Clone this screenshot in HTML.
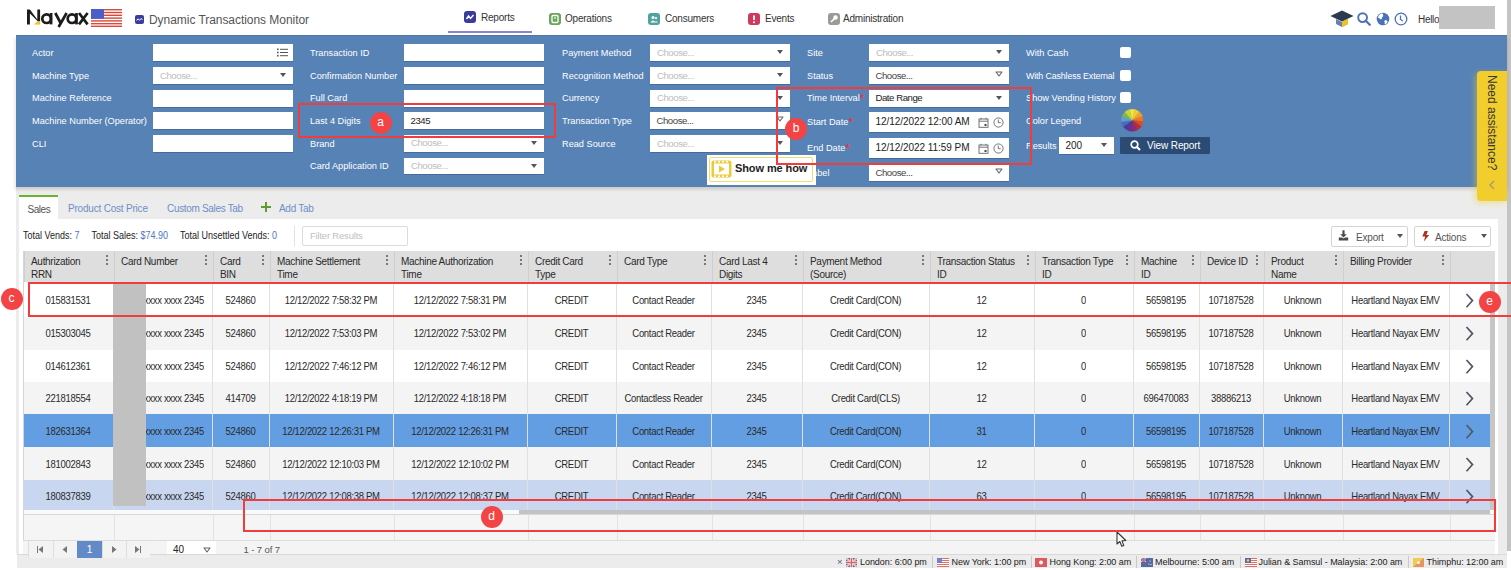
<!DOCTYPE html><html><head><meta charset="utf-8"><style>
*{box-sizing:border-box;margin:0;padding:0}
html,body{width:1511px;height:570px;overflow:hidden;background:#fff;font-family:"Liberation Sans", sans-serif;}
.a{position:absolute;white-space:nowrap}
.lbl{position:absolute;color:#fff;font-size:9.2px;white-space:nowrap;line-height:12px}
.inp{position:absolute;background:#fff;box-shadow:0 1px 0 rgba(40,70,110,.35)}
.ph{position:absolute;left:7px;top:3px;font-size:9.6px;letter-spacing:-0.45px;color:#bdbdbd;line-height:12px;white-space:nowrap}
.val{position:absolute;left:6.5px;top:3px;font-size:9.6px;letter-spacing:-0.45px;color:#444;line-height:12px;white-space:nowrap}
.tri{position:absolute;width:0;height:0;border-left:3px solid transparent;border-right:3px solid transparent;border-top:4px solid #555}
.trio{position:absolute;width:8px;height:6px}
.cb{position:absolute;width:11px;height:11px;background:#fff;border-radius:2px}
.red{position:absolute;border:2px solid #f03c3c}
.dot{position:absolute;width:22px;height:22px;border-radius:50%;background:#f24444;color:#fff;font-size:12px;line-height:21px;text-align:center}
.th{position:absolute;top:251px;height:31px;background:#dedede;border-left:1px solid #cfcfcf;font-size:10px;letter-spacing:-0.3px;color:#2a2a2a;line-height:13.5px;padding:3.5px 0 0 6px;white-space:nowrap}
.kd{position:absolute;right:6.5px;top:4px;width:2px}
.kd i{display:block;width:2px;height:2px;background:#555;margin-bottom:2px;border-radius:1px}
.td{position:absolute;font-size:9.5px;letter-spacing:-0.3px;color:#2a2a2a;transform:scaleY(1.06);text-align:center;line-height:12px;white-space:nowrap;overflow:hidden}
</style></head><body>

<svg class="a" style="left:24px;top:4px" width="68" height="26" viewBox="24 4 68 26">
 <g stroke="#1c1c1c" stroke-width="2.7" fill="none">
  
  <circle cx="46.6" cy="18.7" r="4.3"/>
  <path d="M51.1 13 V24.4"/>
  <path d="M55.3 13 L61.2 24.2 M66.6 13 L58.6 27"/>
  <circle cx="72" cy="18.7" r="4.3"/>
  <path d="M76.5 13 V24.4"/>
  <path d="M79 13 L87.6 24.4 M87.6 13 L79 24.4"/>
 </g>
 <path d="M27 9.4 H29.9 L37.3 19.6 V9.4 H40.1 V21.6 L38 21.6 L29.9 13.6 V24.4 H27 Z" fill="#1c1c1c"/>
 <path d="M33.8 24.4 L40.1 24.4 L40.1 21.2 L37.6 21.2 Z" fill="#f0c21c"/>
</svg>
<svg class="a" style="left:91px;top:9px" width="31" height="18" viewBox="0 0 31 18">
 <rect width="31" height="18" fill="#fff"/>
 <g fill="#d9483b"><rect y="0" width="31" height="1.4"/><rect y="2.8" width="31" height="1.4"/><rect y="5.6" width="31" height="1.4"/><rect y="8.4" width="31" height="1.4"/><rect y="11.2" width="31" height="1.4"/><rect y="14" width="31" height="1.4"/><rect y="16.6" width="31" height="1.4"/></g>
 <rect width="13" height="9.8" fill="#4b5fc9"/>
</svg>
<svg class="a" style="left:135px;top:15px" width="9" height="9" viewBox="0 0 9 9"><rect width="9" height="9" rx="2" fill="#3a3d9a"/><path d="M1.5 5.5 L3 3.8 L4.5 5.3 L6 3.5 L7.5 4.6" stroke="#fff" stroke-width="1" fill="none"/></svg>
<div class="a" style="left:149px;top:12.5px;font-size:12px;color:#555;line-height:15px;letter-spacing:-0.05px">Dynamic Transactions Monitor</div>

<svg class="a" style="left:464px;top:11.0px" width="12" height="12" viewBox="0 0 12 12"><rect width="12" height="12" rx="3" fill="#3b3b9c"/><path d="M2.5 8 L4.5 5 L6.5 7.5 L9.5 4" stroke="#fff" stroke-width="1.4" fill="none"/></svg>
<div class="a" style="left:481px;top:10.5px;font-size:10px;color:#333;line-height:14px;letter-spacing:-0.22px">Reports</div>
<svg class="a" style="left:549px;top:12.5px" width="12" height="12" viewBox="0 0 12 12"><rect width="12" height="12" rx="3" fill="#6aa55a"/><rect x="3" y="2.5" width="6" height="7" rx="1" fill="none" stroke="#fff" stroke-width="1.3"/><path d="M6 4 V6" stroke="#fff" stroke-width="1.2"/></svg>
<div class="a" style="left:565px;top:12px;font-size:10px;color:#333;line-height:14px;letter-spacing:-0.22px">Operations</div>
<svg class="a" style="left:648px;top:12.5px" width="12" height="12" viewBox="0 0 12 12"><rect width="12" height="12" rx="3" fill="#4fa3a0"/><circle cx="5" cy="4.5" r="1.5" fill="#fff"/><path d="M2.5 9.5 Q5 5.5 7.5 9.5 Z" fill="#fff"/><circle cx="8" cy="5" r="1.2" fill="#fff" opacity=".8"/><path d="M6.5 9.5 Q8 6.5 10 9.5 Z" fill="#fff" opacity=".8"/></svg>
<div class="a" style="left:665px;top:12px;font-size:10px;color:#333;line-height:14px;letter-spacing:-0.22px">Consumers</div>
<svg class="a" style="left:748px;top:12.5px" width="12" height="12" viewBox="0 0 12 12"><rect width="12" height="12" rx="3" fill="#cc3a5f"/><path d="M6 2.5 V7" stroke="#fff" stroke-width="1.8"/><circle cx="6" cy="9.2" r="1" fill="#fff"/></svg>
<div class="a" style="left:765px;top:12px;font-size:10px;color:#333;line-height:14px;letter-spacing:-0.22px">Events</div>
<svg class="a" style="left:828px;top:12.5px" width="12" height="12" viewBox="0 0 12 12"><rect width="12" height="12" rx="3" fill="#9a9a9a"/><circle cx="7.5" cy="4.5" r="2.2" fill="#fff"/><path d="M6.5 5.5 L3 9" stroke="#fff" stroke-width="1.6"/></svg>
<div class="a" style="left:843px;top:12px;font-size:10px;color:#333;line-height:14px;letter-spacing:-0.22px">Administration</div>
<div class="a" style="left:448px;top:31px;width:84px;height:2px;background:#8c84c4"></div>

<svg class="a" style="left:1330px;top:10px" width="24" height="18" viewBox="0 0 24 18">
 <path d="M12 0.5 L23.5 6 L12 11.5 L0.5 6 Z" fill="#2b3a4e"/>
 <path d="M6 9 L6 14 L12 17 L18 14 L18 9 L12 12 Z" fill="#6b7fb0"/>
 <path d="M12 12 L18 9 L18 14 L12 17 Z" fill="#f2c21a"/>
</svg>
<svg class="a" style="left:1357px;top:12px" width="14" height="14" viewBox="0 0 14 14"><circle cx="5.6" cy="5.6" r="4.4" stroke="#4a72b8" stroke-width="1.9" fill="none"/><path d="M8.7 8.7 L12.8 12.8" stroke="#4a72b8" stroke-width="2.2" stroke-linecap="round"/></svg>
<svg class="a" style="left:1376px;top:12px" width="14" height="14" viewBox="0 0 14 14"><circle cx="7" cy="7" r="6.3" fill="#4a72b8"/><path d="M4.5 2 Q6.5 3.5 5.8 5.5 Q4.2 6.2 4.8 8 Q6.2 9 5.5 12 Q4.5 11 4 9.5 Q2.5 8.5 2.5 6.5 Q3 4 4.5 2 Z" fill="#fff" opacity=".0"/><path d="M6 1.2 Q8 2.5 7 4.5 Q5.5 5 6 6.5 L4.8 7.5 Q4 6 2.2 6 Q1.5 3 6 1.2 Z M9.2 8 Q11.8 8.2 11.5 10 Q10.5 12.2 8.6 12.6 Q9.2 10.5 8.2 9.5 Z" fill="#fff"/></svg>
<svg class="a" style="left:1394px;top:12px" width="14" height="14" viewBox="0 0 14 14"><circle cx="7" cy="7" r="5.8" stroke="#4a72b8" stroke-width="1.3" fill="none"/><path d="M6.5 3.5 L6.5 7.5 L9 9" stroke="#4a72b8" stroke-width="1.3" fill="none"/></svg>
<div class="a" style="left:1418px;top:14px;font-size:10px;color:#333;line-height:12px;letter-spacing:-0.3px">Hello</div>
<div class="a" style="left:1439px;top:6px;width:56px;height:23px;background:#c3c3c3"></div>
<div class="a" style="left:1507px;top:0;width:4px;height:551px;background:#c4c4c4"></div>

<div class="a" style="left:16px;top:35px;width:1491px;height:152px;background:#5782b5;border-top:1px solid #4d77ab;box-shadow:0 1px 0 #4a74a6, 0 3px 4px rgba(60,50,40,.22)"></div>
<div class="lbl" style="left:32px;top:46.5px">Actor</div>
<div class="lbl" style="left:32px;top:69.5px">Machine Type</div>
<div class="lbl" style="left:32px;top:92.0px">Machine Reference</div>
<div class="lbl" style="left:32px;top:114.5px">Machine Number (Operator)</div>
<div class="lbl" style="left:32px;top:137.5px">CLI</div>
<div class="inp" style="left:153px;top:44px;width:140px;height:17px"><svg style="position:absolute;right:5px;top:4px" width="11" height="9" viewBox="0 0 11 9"><g fill="#555"><rect x="0" y="0.5" width="1.6" height="1.6"/><rect x="0" y="3.7" width="1.6" height="1.6"/><rect x="0" y="6.9" width="1.6" height="1.6"/><rect x="3" y="0.8" width="8" height="1"/><rect x="3" y="4" width="8" height="1"/><rect x="3" y="7.2" width="8" height="1"/></g></svg></div>
<div class="inp" style="left:153px;top:67px;width:140px;height:17px"><div class="ph" style="top:2.5px">Choose...</div></div><div class="tri" style="left:279.8px;top:73.3px"></div>
<div class="inp" style="left:153px;top:89.5px;width:140px;height:17px"></div>
<div class="inp" style="left:153px;top:112px;width:140px;height:17px"></div>
<div class="inp" style="left:153px;top:135px;width:140px;height:17px"></div>
<div class="lbl" style="left:310px;top:46.5px">Transaction ID</div>
<div class="lbl" style="left:310px;top:69.5px">Confirmation Number</div>
<div class="lbl" style="left:310px;top:92.0px">Full Card</div>
<div class="lbl" style="left:310px;top:114.5px">Last 4 Digits</div>
<div class="lbl" style="left:310px;top:137.5px">Brand</div>
<div class="lbl" style="left:310px;top:160.0px">Card Application ID</div>
<div class="inp" style="left:404px;top:44px;width:140px;height:17px"></div>
<div class="inp" style="left:404px;top:67px;width:140px;height:17px"></div>
<div class="inp" style="left:404px;top:89.5px;width:140px;height:17px"></div>
<div class="inp" style="left:404px;top:112px;width:140px;height:17px"><div class="val" style="top:2.5px"><span style="color:#222">2345</span></div></div>
<div class="inp" style="left:404px;top:135px;width:140px;height:16.5px"><div class="ph" style="top:2.25px">Choose...</div></div><div class="tri" style="left:530.8px;top:141.05px"></div>
<div class="inp" style="left:404px;top:157.5px;width:140px;height:16.5px"><div class="ph" style="top:2.25px">Choose...</div></div><div class="tri" style="left:530.8px;top:163.55px"></div>
<div class="lbl" style="left:562px;top:46.5px">Payment Method</div>
<div class="lbl" style="left:562px;top:69.5px">Recognition Method</div>
<div class="lbl" style="left:562px;top:92.0px">Currency</div>
<div class="lbl" style="left:562px;top:114.5px">Transaction Type</div>
<div class="lbl" style="left:562px;top:137.5px">Read Source</div>
<div class="inp" style="left:650px;top:44px;width:140px;height:17px"><div class="ph" style="top:2.5px">Choose...</div></div><div class="tri" style="left:776.8px;top:50.3px"></div>
<div class="inp" style="left:650px;top:67px;width:140px;height:17px"><div class="ph" style="top:2.5px">Choose...</div></div><div class="tri" style="left:776.8px;top:73.3px"></div>
<div class="inp" style="left:650px;top:89.5px;width:140px;height:17px"><div class="ph" style="top:2.5px">Choose...</div></div><div class="tri" style="left:776.8px;top:95.8px"></div>
<div class="inp" style="left:650px;top:112px;width:140px;height:17px"><div class="val" style="top:2.5px">Choose...</div></div><svg class="a" style="left:776.3px;top:115.8px" width="8" height="6" viewBox="0 0 8 6"><path d="M1 1 L7 1 L4 5 Z" fill="#fff" stroke="#666" stroke-width="1.1" stroke-linejoin="round"/></svg>
<div class="inp" style="left:650px;top:135px;width:140px;height:17px"><div class="ph" style="top:2.5px">Choose...</div></div><div class="tri" style="left:776.8px;top:141.3px"></div>
<div class="lbl" style="left:807px;top:46.5px">Site</div>
<div class="inp" style="left:869px;top:44px;width:140px;height:17px"><div class="ph" style="top:2.5px">Choose...</div></div><div class="tri" style="left:995.8px;top:50.3px"></div>
<div class="lbl" style="left:807px;top:69.5px">Status</div>
<div class="inp" style="left:869px;top:67px;width:140px;height:17px"><div class="val" style="top:2.5px">Choose...</div></div><svg class="a" style="left:995.3px;top:70.8px" width="8" height="6" viewBox="0 0 8 6"><path d="M1 1 L7 1 L4 5 Z" fill="#fff" stroke="#666" stroke-width="1.1" stroke-linejoin="round"/></svg>
<div class="lbl" style="left:807px;top:92.0px">Time Interval<span style="color:#ec3540;font-size:10px;font-weight:bold;position:relative;top:1px;margin-left:0.5px">*</span></div>
<div class="inp" style="left:869px;top:89.5px;width:140px;height:17px"><div class="val" style="top:2.5px"><span style="color:#222">Date Range</span></div></div><div class="tri" style="left:995.8px;top:95.8px"></div>
<div class="lbl" style="left:807px;top:116.0px">Start Date<span style="color:#ec3540;font-size:10px;font-weight:bold;position:relative;top:1px;margin-left:0.5px">*</span></div>
<div class="inp" style="left:869px;top:112px;width:140px;height:19.5px"><div class="val" style="top:3.75px"><span style="font-size:10px;letter-spacing:-0.05px;color:#222">12/12/2022 12:00 AM</span></div><svg style="position:absolute;left:109px;top:4.5px" width="11" height="11" viewBox="0 0 11 11"><rect x="1" y="2" width="9" height="8.3" fill="none" stroke="#666" stroke-width="0.9"/><path d="M1 4.2 L10 4.2" stroke="#666" stroke-width="0.9"/><path d="M3 0.8 L3 2.5 M8 0.8 L8 2.5" stroke="#666" stroke-width="0.9"/><rect x="6.5" y="7" width="2" height="2" fill="#444"/></svg><svg style="position:absolute;left:124px;top:5px" width="11" height="11" viewBox="0 0 11 11"><circle cx="5.5" cy="5.5" r="4.6" fill="none" stroke="#666" stroke-width="0.9"/><path d="M5.3 2.6 L5.3 5.7 L7.8 5.7" fill="none" stroke="#666" stroke-width="0.9"/></svg></div>
<div class="lbl" style="left:807px;top:142.0px">End Date<span style="color:#ec3540;font-size:10px;font-weight:bold;position:relative;top:1px;margin-left:0.5px">*</span></div>
<div class="inp" style="left:869px;top:138px;width:140px;height:19.5px"><div class="val" style="top:3.75px"><span style="font-size:10px;letter-spacing:-0.05px;color:#222">12/12/2022 11:59 PM</span></div><svg style="position:absolute;left:109px;top:4.5px" width="11" height="11" viewBox="0 0 11 11"><rect x="1" y="2" width="9" height="8.3" fill="none" stroke="#666" stroke-width="0.9"/><path d="M1 4.2 L10 4.2" stroke="#666" stroke-width="0.9"/><path d="M3 0.8 L3 2.5 M8 0.8 L8 2.5" stroke="#666" stroke-width="0.9"/><rect x="6.5" y="7" width="2" height="2" fill="#444"/></svg><svg style="position:absolute;left:124px;top:5px" width="11" height="11" viewBox="0 0 11 11"><circle cx="5.5" cy="5.5" r="4.6" fill="none" stroke="#666" stroke-width="0.9"/><path d="M5.3 2.6 L5.3 5.7 L7.8 5.7" fill="none" stroke="#666" stroke-width="0.9"/></svg></div>
<div class="lbl" style="left:807px;top:166.5px">Label</div>
<div class="inp" style="left:869px;top:164.5px;width:140px;height:16px"><div class="val" style="top:2.0px">Choose...</div></div><svg class="a" style="left:995.3px;top:167.8px" width="8" height="6" viewBox="0 0 8 6"><path d="M1 1 L7 1 L4 5 Z" fill="#fff" stroke="#666" stroke-width="1.1" stroke-linejoin="round"/></svg>
<div class="lbl" style="left:1026px;top:46.5px">With Cash</div>
<div class="cb" style="left:1120px;top:47px"></div>
<div class="lbl" style="left:1026px;top:69.5px"><span style="letter-spacing:-0.15px;font-size:8.9px">With Cashless External</span></div>
<div class="cb" style="left:1120px;top:70px"></div>
<div class="lbl" style="left:1026px;top:92.0px">Show Vending History</div>
<div class="cb" style="left:1120px;top:92px"></div>
<div class="lbl" style="left:1026px;top:114.5px">Color Legend</div>
<svg class="a" style="left:1120.5px;top:109px" width="22.5" height="22.5" viewBox="0 0 22.5 22.5"><path d="M11.25 11.25 L8.62 0.57 A11 11 0 0 1 13.88 0.57 Z" fill="#f4e43c" stroke="#f4e43c" stroke-width="0.4"/><path d="M11.25 11.25 L13.88 0.57 A11 11 0 0 1 18.54 3.02 Z" fill="#f2c935" stroke="#f2c935" stroke-width="0.4"/><path d="M11.25 11.25 L18.54 3.02 A11 11 0 0 1 21.54 7.35 Z" fill="#eea22e" stroke="#eea22e" stroke-width="0.4"/><path d="M11.25 11.25 L21.54 7.35 A11 11 0 0 1 22.17 12.58 Z" fill="#e8782b" stroke="#e8782b" stroke-width="0.4"/><path d="M11.25 11.25 L22.17 12.58 A11 11 0 0 1 20.30 17.50 Z" fill="#db4d2a" stroke="#db4d2a" stroke-width="0.4"/><path d="M11.25 11.25 L20.30 17.50 A11 11 0 0 1 16.36 20.99 Z" fill="#b92c3b" stroke="#b92c3b" stroke-width="0.4"/><path d="M11.25 11.25 L16.36 20.99 A11 11 0 0 1 11.25 22.25 Z" fill="#8f2a66" stroke="#8f2a66" stroke-width="0.4"/><path d="M11.25 11.25 L11.25 22.25 A11 11 0 0 1 6.14 20.99 Z" fill="#6a2e8c" stroke="#6a2e8c" stroke-width="0.4"/><path d="M11.25 11.25 L6.14 20.99 A11 11 0 0 1 2.20 17.50 Z" fill="#4f3a98" stroke="#4f3a98" stroke-width="0.4"/><path d="M11.25 11.25 L2.20 17.50 A11 11 0 0 1 0.33 12.58 Z" fill="#4a6cc0" stroke="#4a6cc0" stroke-width="0.4"/><path d="M11.25 11.25 L0.33 12.58 A11 11 0 0 1 0.96 7.35 Z" fill="#5f9ed6" stroke="#5f9ed6" stroke-width="0.4"/><path d="M11.25 11.25 L0.96 7.35 A11 11 0 0 1 3.96 3.02 Z" fill="#7cb84a" stroke="#7cb84a" stroke-width="0.4"/><path d="M11.25 11.25 L3.96 3.02 A11 11 0 0 1 8.62 0.57 Z" fill="#c8d63a" stroke="#c8d63a" stroke-width="0.4"/></svg>
<div class="lbl" style="left:1026px;top:139.5px">Results</div>
<div class="inp" style="left:1059px;top:137px;width:55px;height:17px"><div class="val" style="top:2.5px"><span style="font-size:10px;letter-spacing:-0.1px;color:#222">200</span></div></div><div class="tri" style="left:1100.8px;top:143.3px"></div>
<div class="a" style="left:1120px;top:137px;width:89.5px;height:17px;background:#2c4b74;border-radius:1px"></div>
<svg class="a" style="left:1130px;top:140px" width="11" height="11" viewBox="0 0 11 11"><circle cx="4.5" cy="4.5" r="3.3" stroke="#fff" stroke-width="1.7" fill="none"/><path d="M7 7 L10 10" stroke="#fff" stroke-width="2.2"/></svg>
<div class="a" style="left:1147px;top:139.5px;font-size:10px;color:#fff;line-height:12px;letter-spacing:-0.1px">View Report</div>

<div class="a" style="left:16px;top:187px;width:1491px;height:367px;background:#ececec"></div>
<div class="a" style="left:16px;top:187px;width:1491px;height:5px;background:linear-gradient(rgba(95,85,75,.22),rgba(95,85,75,0))"></div>
<div class="a" style="left:19px;top:219px;width:1479px;height:335px;background:#fff"></div>
<div class="a" style="left:19px;top:195px;width:39px;height:24px;background:#fff;border-top:2px solid #6ab42d"></div>
<div class="a" style="left:27.5px;top:203.5px;font-size:10px;color:#555;line-height:12px;letter-spacing:-0.45px">Sales</div>
<div class="a" style="left:68px;top:203px;font-size:10px;color:#6e8fc8;line-height:12px;letter-spacing:-0.2px">Product Cost Price</div>
<div class="a" style="left:167px;top:203px;font-size:10px;color:#6e8fc8;line-height:12px;letter-spacing:-0.32px">Custom Sales Tab</div>
<svg class="a" style="left:261px;top:202px" width="10" height="10" viewBox="0 0 10 10"><path d="M5 0 V10 M0 5 H10" stroke="#5d9d2c" stroke-width="2"/></svg>
<div class="a" style="left:279px;top:203px;font-size:10px;color:#6e8fc8;line-height:12px;letter-spacing:-0.3px">Add Tab</div>
<div class="a" style="left:23px;top:230.2px;font-size:9px;color:#222;line-height:12px;transform:scaleY(1.12);transform-origin:0 75%">Total Vends: <span style="color:#4f78c0">7</span></div>
<div class="a" style="left:91.5px;top:230.2px;font-size:9px;color:#222;line-height:12px;transform:scaleY(1.12);transform-origin:0 75%">Total Sales: <span style="color:#4f78c0">$74.90</span></div>
<div class="a" style="left:180px;top:230.2px;font-size:9px;color:#222;line-height:12px;transform:scaleY(1.12);transform-origin:0 75%">Total Unsettled Vends: <span style="color:#4f78c0">0</span></div>
<div class="a" style="left:294px;top:226px;width:1px;height:20px;background:#e2e2e2"></div>
<div class="a" style="left:301.5px;top:226px;width:106px;height:20px;border:1px solid #dcdcdc;border-radius:2px"></div>
<div class="a" style="left:310px;top:230px;font-size:9.5px;color:#c0c0c0;line-height:12px;letter-spacing:-0.2px">Filter Results</div>
<div class="a" style="left:1331px;top:226px;width:77px;height:21px;border:1px solid #d4d4d4;border-radius:2px;background:#fff"></div>
<svg class="a" style="left:1338px;top:230px" width="12" height="12" viewBox="0 0 12 12"><path d="M5.5 0.3 V5" stroke="#4a4a4a" stroke-width="2.2"/><path d="M2.2 4.2 L8.8 4.2 L5.5 7.6 Z" fill="#4a4a4a"/><path d="M0.8 7.5 H4 L5.5 8.6 L7 7.5 H10.2 V10.5 H0.8 Z" fill="#4a4a4a"/></svg>
<div class="a" style="left:1356px;top:232px;font-size:10px;color:#555;line-height:12px;letter-spacing:-0.2px">Export</div>
<div class="tri" style="left:1397px;top:234px"></div>
<div class="a" style="left:1414px;top:226px;width:77px;height:21px;border:1px solid #d4d4d4;border-radius:2px;background:#fff"></div>
<svg class="a" style="left:1421.5px;top:230.5px" width="8" height="11" viewBox="0 0 8 11"><path d="M2.6 0 L0.3 5.6 L3.2 5.6 L1.8 10.5 L7.2 3.9 L4.3 3.9 L5.9 0 Z" fill="#a8321a"/></svg>
<div class="a" style="left:1435px;top:232px;font-size:10px;color:#555;line-height:12px;letter-spacing:-0.2px">Actions</div>
<div class="tri" style="left:1481px;top:234px"></div>
<div class="th" style="left:24px;width:90px">Authrization<br>RRN<div class="kd"><i></i><i></i><i></i></div></div>
<div class="th" style="left:114px;width:99px">Card Number<br><div class="kd"><i></i><i></i><i></i></div></div>
<div class="th" style="left:213px;width:57px">Card<br>BIN<div class="kd"><i></i><i></i><i></i></div></div>
<div class="th" style="left:270px;width:124px">Machine Settlement<br>Time<div class="kd"><i></i><i></i><i></i></div></div>
<div class="th" style="left:394px;width:134px">Machine Authorization<br>Time<div class="kd"><i></i><i></i><i></i></div></div>
<div class="th" style="left:528px;width:89px">Credit Card<br>Type<div class="kd"><i></i><i></i><i></i></div></div>
<div class="th" style="left:617px;width:95px">Card Type<br><div class="kd"><i></i><i></i><i></i></div></div>
<div class="th" style="left:712px;width:91px">Card Last 4<br>Digits<div class="kd"><i></i><i></i><i></i></div></div>
<div class="th" style="left:803px;width:127px">Payment Method<br>(Source)<div class="kd"><i></i><i></i><i></i></div></div>
<div class="th" style="left:930px;width:105px">Transaction Status<br>ID<div class="kd"><i></i><i></i><i></i></div></div>
<div class="th" style="left:1035px;width:99px">Transaction Type<br>ID<div class="kd"><i></i><i></i><i></i></div></div>
<div class="th" style="left:1134px;width:66px">Machine<br>ID<div class="kd"><i></i><i></i><i></i></div></div>
<div class="th" style="left:1200px;width:64px">Device ID<br><div class="kd"><i></i><i></i><i></i></div></div>
<div class="th" style="left:1264px;width:79px">Product<br>Name<div class="kd"><i></i><i></i><i></i></div></div>
<div class="th" style="left:1343px;width:107px">Billing Provider<br><div class="kd"><i></i><i></i><i></i></div></div>
<div class="th" style="left:1450px;width:41px"><br></div>
<div class="a" style="left:1490px;top:251px;width:5px;height:31px;background:#dedede"></div>
<div class="a" style="left:23px;top:282px;width:1467px;height:232px;overflow:hidden">
<div class="a" style="left:0;top:0px;width:1467px;height:35px;background:#fff"></div>
<div class="td" style="left:0px;top:13px;width:90px">015831531</div>
<div class="td" style="left:90px;top:13px;width:91px;text-align:right">xxxx xxxx 2345</div>
<div class="td" style="left:189px;top:13px;width:57px">524860</div>
<div class="td" style="left:246px;top:13px;width:124px">12/12/2022 7:58:32 PM</div>
<div class="td" style="left:370px;top:13px;width:134px">12/12/2022 7:58:31 PM</div>
<div class="td" style="left:504px;top:13px;width:89px">CREDIT</div>
<div class="td" style="left:593px;top:13px;width:95px">Contact Reader</div>
<div class="td" style="left:688px;top:13px;width:91px">2345</div>
<div class="td" style="left:779px;top:13px;width:127px">Credit Card(CON)</div>
<div class="td" style="left:906px;top:13px;width:105px">12</div>
<div class="td" style="left:1011px;top:13px;width:99px">0</div>
<div class="td" style="left:1110px;top:13px;width:66px">56598195</div>
<div class="td" style="left:1176px;top:13px;width:64px">107187528</div>
<div class="td" style="left:1240px;top:13px;width:79px">Unknown</div>
<div class="td" style="left:1319px;top:13px;width:107px">Heartland Nayax EMV</div>
<svg class="a" style="left:1441.5px;top:11px" width="9" height="15" viewBox="0 0 9 15"><path d="M1.5 1 L7.5 7.6 L1.5 14.2" stroke="#525866" stroke-width="1.7" fill="none"/></svg>
<div class="a" style="left:0;top:35px;width:1467px;height:33px;background:#f4f4f4"></div>
<div class="td" style="left:0px;top:46px;width:90px">015303045</div>
<div class="td" style="left:90px;top:46px;width:91px;text-align:right">xxxx xxxx 2345</div>
<div class="td" style="left:189px;top:46px;width:57px">524860</div>
<div class="td" style="left:246px;top:46px;width:124px">12/12/2022 7:53:03 PM</div>
<div class="td" style="left:370px;top:46px;width:134px">12/12/2022 7:53:02 PM</div>
<div class="td" style="left:504px;top:46px;width:89px">CREDIT</div>
<div class="td" style="left:593px;top:46px;width:95px">Contact Reader</div>
<div class="td" style="left:688px;top:46px;width:91px">2345</div>
<div class="td" style="left:779px;top:46px;width:127px">Credit Card(CON)</div>
<div class="td" style="left:906px;top:46px;width:105px">12</div>
<div class="td" style="left:1011px;top:46px;width:99px">0</div>
<div class="td" style="left:1110px;top:46px;width:66px">56598195</div>
<div class="td" style="left:1176px;top:46px;width:64px">107187528</div>
<div class="td" style="left:1240px;top:46px;width:79px">Unknown</div>
<div class="td" style="left:1319px;top:46px;width:107px">Heartland Nayax EMV</div>
<svg class="a" style="left:1441.5px;top:44px" width="9" height="15" viewBox="0 0 9 15"><path d="M1.5 1 L7.5 7.6 L1.5 14.2" stroke="#525866" stroke-width="1.7" fill="none"/></svg>
<div class="a" style="left:0;top:68px;width:1467px;height:32px;background:#fff"></div>
<div class="td" style="left:0px;top:79px;width:90px">014612361</div>
<div class="td" style="left:90px;top:79px;width:91px;text-align:right">xxxx xxxx 2345</div>
<div class="td" style="left:189px;top:79px;width:57px">524860</div>
<div class="td" style="left:246px;top:79px;width:124px">12/12/2022 7:46:12 PM</div>
<div class="td" style="left:370px;top:79px;width:134px">12/12/2022 7:46:12 PM</div>
<div class="td" style="left:504px;top:79px;width:89px">CREDIT</div>
<div class="td" style="left:593px;top:79px;width:95px">Contact Reader</div>
<div class="td" style="left:688px;top:79px;width:91px">2345</div>
<div class="td" style="left:779px;top:79px;width:127px">Credit Card(CON)</div>
<div class="td" style="left:906px;top:79px;width:105px">12</div>
<div class="td" style="left:1011px;top:79px;width:99px">0</div>
<div class="td" style="left:1110px;top:79px;width:66px">56598195</div>
<div class="td" style="left:1176px;top:79px;width:64px">107187528</div>
<div class="td" style="left:1240px;top:79px;width:79px">Unknown</div>
<div class="td" style="left:1319px;top:79px;width:107px">Heartland Nayax EMV</div>
<svg class="a" style="left:1441.5px;top:77px" width="9" height="15" viewBox="0 0 9 15"><path d="M1.5 1 L7.5 7.6 L1.5 14.2" stroke="#525866" stroke-width="1.7" fill="none"/></svg>
<div class="a" style="left:0;top:100px;width:1467px;height:32px;background:#f4f4f4"></div>
<div class="td" style="left:0px;top:111px;width:90px">221818554</div>
<div class="td" style="left:90px;top:111px;width:91px;text-align:right">xxxx xxxx 2345</div>
<div class="td" style="left:189px;top:111px;width:57px">414709</div>
<div class="td" style="left:246px;top:111px;width:124px">12/12/2022 4:18:19 PM</div>
<div class="td" style="left:370px;top:111px;width:134px">12/12/2022 4:18:18 PM</div>
<div class="td" style="left:504px;top:111px;width:89px">CREDIT</div>
<div class="td" style="left:593px;top:111px;width:95px">Contactless Reader</div>
<div class="td" style="left:688px;top:111px;width:91px">2345</div>
<div class="td" style="left:779px;top:111px;width:127px">Credit Card(CLS)</div>
<div class="td" style="left:906px;top:111px;width:105px">12</div>
<div class="td" style="left:1011px;top:111px;width:99px">0</div>
<div class="td" style="left:1110px;top:111px;width:66px">696470083</div>
<div class="td" style="left:1176px;top:111px;width:64px">38886213</div>
<div class="td" style="left:1240px;top:111px;width:79px">Unknown</div>
<div class="td" style="left:1319px;top:111px;width:107px">Heartland Nayax EMV</div>
<svg class="a" style="left:1441.5px;top:109px" width="9" height="15" viewBox="0 0 9 15"><path d="M1.5 1 L7.5 7.6 L1.5 14.2" stroke="#525866" stroke-width="1.7" fill="none"/></svg>
<div class="a" style="left:0;top:132px;width:1467px;height:33px;background:#639ee2"></div>
<div class="td" style="left:0px;top:144px;width:90px">182631364</div>
<div class="td" style="left:90px;top:144px;width:91px;text-align:right">xxxx xxxx 2345</div>
<div class="td" style="left:189px;top:144px;width:57px">524860</div>
<div class="td" style="left:246px;top:144px;width:124px">12/12/2022 12:26:31 PM</div>
<div class="td" style="left:370px;top:144px;width:134px">12/12/2022 12:26:31 PM</div>
<div class="td" style="left:504px;top:144px;width:89px">CREDIT</div>
<div class="td" style="left:593px;top:144px;width:95px">Contact Reader</div>
<div class="td" style="left:688px;top:144px;width:91px">2345</div>
<div class="td" style="left:779px;top:144px;width:127px">Credit Card(CON)</div>
<div class="td" style="left:906px;top:144px;width:105px">31</div>
<div class="td" style="left:1011px;top:144px;width:99px">0</div>
<div class="td" style="left:1110px;top:144px;width:66px">56598195</div>
<div class="td" style="left:1176px;top:144px;width:64px">107187528</div>
<div class="td" style="left:1240px;top:144px;width:79px">Unknown</div>
<div class="td" style="left:1319px;top:144px;width:107px">Heartland Nayax EMV</div>
<svg class="a" style="left:1441.5px;top:142px" width="9" height="15" viewBox="0 0 9 15"><path d="M1.5 1 L7.5 7.6 L1.5 14.2" stroke="#525866" stroke-width="1.7" fill="none"/></svg>
<div class="a" style="left:0;top:165px;width:1467px;height:33px;background:#f4f4f4"></div>
<div class="td" style="left:0px;top:177px;width:90px">181002843</div>
<div class="td" style="left:90px;top:177px;width:91px;text-align:right">xxxx xxxx 2345</div>
<div class="td" style="left:189px;top:177px;width:57px">524860</div>
<div class="td" style="left:246px;top:177px;width:124px">12/12/2022 12:10:03 PM</div>
<div class="td" style="left:370px;top:177px;width:134px">12/12/2022 12:10:02 PM</div>
<div class="td" style="left:504px;top:177px;width:89px">CREDIT</div>
<div class="td" style="left:593px;top:177px;width:95px">Contact Reader</div>
<div class="td" style="left:688px;top:177px;width:91px">2345</div>
<div class="td" style="left:779px;top:177px;width:127px">Credit Card(CON)</div>
<div class="td" style="left:906px;top:177px;width:105px">12</div>
<div class="td" style="left:1011px;top:177px;width:99px">0</div>
<div class="td" style="left:1110px;top:177px;width:66px">56598195</div>
<div class="td" style="left:1176px;top:177px;width:64px">107187528</div>
<div class="td" style="left:1240px;top:177px;width:79px">Unknown</div>
<div class="td" style="left:1319px;top:177px;width:107px">Heartland Nayax EMV</div>
<svg class="a" style="left:1441.5px;top:175px" width="9" height="15" viewBox="0 0 9 15"><path d="M1.5 1 L7.5 7.6 L1.5 14.2" stroke="#525866" stroke-width="1.7" fill="none"/></svg>
<div class="a" style="left:0;top:198px;width:1467px;height:33px;background:#c8d6f0"></div>
<div class="td" style="left:0px;top:209px;width:90px">180837839</div>
<div class="td" style="left:90px;top:209px;width:91px;text-align:right">xxxx xxxx 2345</div>
<div class="td" style="left:189px;top:209px;width:57px">524860</div>
<div class="td" style="left:246px;top:209px;width:124px">12/12/2022 12:08:38 PM</div>
<div class="td" style="left:370px;top:209px;width:134px">12/12/2022 12:08:37 PM</div>
<div class="td" style="left:504px;top:209px;width:89px">CREDIT</div>
<div class="td" style="left:593px;top:209px;width:95px">Contact Reader</div>
<div class="td" style="left:688px;top:209px;width:91px">2345</div>
<div class="td" style="left:779px;top:209px;width:127px">Credit Card(CON)</div>
<div class="td" style="left:906px;top:209px;width:105px">63</div>
<div class="td" style="left:1011px;top:209px;width:99px">0</div>
<div class="td" style="left:1110px;top:209px;width:66px">56598195</div>
<div class="td" style="left:1176px;top:209px;width:64px">107187528</div>
<div class="td" style="left:1240px;top:209px;width:79px">Unknown</div>
<div class="td" style="left:1319px;top:209px;width:107px">Heartland Nayax EMV</div>
<svg class="a" style="left:1441.5px;top:207px" width="9" height="15" viewBox="0 0 9 15"><path d="M1.5 1 L7.5 7.6 L1.5 14.2" stroke="#525866" stroke-width="1.7" fill="none"/></svg>
<div class="a" style="left:90px;top:0;width:1px;height:232px;background:#e0e0e0"></div>
<div class="a" style="left:189px;top:0;width:1px;height:232px;background:#e0e0e0"></div>
<div class="a" style="left:246px;top:0;width:1px;height:232px;background:#e0e0e0"></div>
<div class="a" style="left:370px;top:0;width:1px;height:232px;background:#e0e0e0"></div>
<div class="a" style="left:504px;top:0;width:1px;height:232px;background:#e0e0e0"></div>
<div class="a" style="left:593px;top:0;width:1px;height:232px;background:#e0e0e0"></div>
<div class="a" style="left:688px;top:0;width:1px;height:232px;background:#e0e0e0"></div>
<div class="a" style="left:779px;top:0;width:1px;height:232px;background:#e0e0e0"></div>
<div class="a" style="left:906px;top:0;width:1px;height:232px;background:#e0e0e0"></div>
<div class="a" style="left:1011px;top:0;width:1px;height:232px;background:#e0e0e0"></div>
<div class="a" style="left:1110px;top:0;width:1px;height:232px;background:#e0e0e0"></div>
<div class="a" style="left:1176px;top:0;width:1px;height:232px;background:#e0e0e0"></div>
<div class="a" style="left:1240px;top:0;width:1px;height:232px;background:#e0e0e0"></div>
<div class="a" style="left:1319px;top:0;width:1px;height:232px;background:#e0e0e0"></div>
<div class="a" style="left:1426px;top:0;width:1px;height:232px;background:#e0e0e0"></div>
</div>
<div class="a" style="left:1490px;top:282px;width:5px;height:229px;background:#c6c6c6"></div>
<div class="a" style="left:23px;top:509.5px;width:1472px;height:5px;background:#fafafa"></div>
<div class="a" style="left:519px;top:510px;width:971px;height:4.5px;background:#c3c3c3"></div>
<div class="a" style="left:23px;top:514px;width:1472px;height:1px;background:#d8d8d8"></div>
<div class="a" style="left:23px;top:515px;width:1472px;height:26px;background:#f5f5f5;border-bottom:1px solid #dcdcdc"></div>
<div class="a" style="left:114px;top:515px;width:1px;height:25px;background:#e3e3e3"></div>
<div class="a" style="left:213px;top:515px;width:1px;height:25px;background:#e3e3e3"></div>
<div class="a" style="left:270px;top:515px;width:1px;height:25px;background:#e3e3e3"></div>
<div class="a" style="left:394px;top:515px;width:1px;height:25px;background:#e3e3e3"></div>
<div class="a" style="left:528px;top:515px;width:1px;height:25px;background:#e3e3e3"></div>
<div class="a" style="left:617px;top:515px;width:1px;height:25px;background:#e3e3e3"></div>
<div class="a" style="left:712px;top:515px;width:1px;height:25px;background:#e3e3e3"></div>
<div class="a" style="left:803px;top:515px;width:1px;height:25px;background:#e3e3e3"></div>
<div class="a" style="left:930px;top:515px;width:1px;height:25px;background:#e3e3e3"></div>
<div class="a" style="left:1035px;top:515px;width:1px;height:25px;background:#e3e3e3"></div>
<div class="a" style="left:1134px;top:515px;width:1px;height:25px;background:#e3e3e3"></div>
<div class="a" style="left:1200px;top:515px;width:1px;height:25px;background:#e3e3e3"></div>
<div class="a" style="left:1264px;top:515px;width:1px;height:25px;background:#e3e3e3"></div>
<div class="a" style="left:1343px;top:515px;width:1px;height:25px;background:#e3e3e3"></div>
<div class="a" style="left:1450px;top:515px;width:1px;height:25px;background:#e3e3e3"></div>
<div class="a" style="left:23px;top:251px;width:1px;height:289px;background:#d6d6d6"></div>
<div class="a" style="left:17px;top:554px;width:1490px;height:14px;background:#ececec;border-top:1px solid #d9d9d9"></div>
<div class="a" style="left:23px;top:541px;width:1472px;height:13px;background:#f4f4f4"></div>
<div class="a" style="left:28px;top:541px;width:24.5px;height:16.8px;background:#f3f3f3;border-left:1px solid #dedede"></div>
<div class="a" style="left:52.5px;top:541px;width:24.5px;height:16.8px;background:#f3f3f3;border-left:1px solid #dedede"></div>
<div class="a" style="left:77px;top:541px;width:25px;height:16.8px;background:#638ac8;color:#fff;font-size:10px;text-align:center;line-height:17px">1</div>
<div class="a" style="left:102px;top:541px;width:24px;height:16.8px;background:#f3f3f3;border-left:1px solid #dedede"></div>
<div class="a" style="left:126px;top:541px;width:24px;height:16.8px;background:#f3f3f3;border-left:1px solid #dedede"></div>
<svg class="a" style="left:37px;top:546px" width="6" height="7" viewBox="0 0 6 7"><path d="M0.5 0 V7" stroke="#777" stroke-width="1"/><path d="M6 0 L1.5 3.5 L6 7 Z" fill="#777"/></svg>
<svg class="a" style="left:62px;top:546px" width="5" height="7" viewBox="0 0 5 7"><path d="M5 0 L0.5 3.5 L5 7 Z" fill="#777"/></svg>
<svg class="a" style="left:112px;top:546px" width="5" height="7" viewBox="0 0 5 7"><path d="M0 0 L4.5 3.5 L0 7 Z" fill="#777"/></svg>
<svg class="a" style="left:135px;top:546px" width="6" height="7" viewBox="0 0 6 7"><path d="M5.5 0 V7" stroke="#777" stroke-width="1"/><path d="M0 0 L4.5 3.5 L0 7 Z" fill="#777"/></svg>
<div class="a" style="left:167px;top:541px;width:49px;height:13px;background:#fff;overflow:hidden"><div style="position:absolute;left:6px;top:2.5px;font-size:10px;color:#222;line-height:12px">40</div><svg style="position:absolute;left:36px;top:6px" width="8" height="6" viewBox="0 0 8 6"><path d="M1 1 L7 1 L4 5 Z" fill="#fff" stroke="#666" stroke-width="1.1" stroke-linejoin="round"/></svg></div>
<div class="a" style="left:243.5px;top:540px;height:14px;overflow:hidden"><div style="margin-top:3.5px;font-size:9.5px;color:#555;line-height:12px;letter-spacing:-0.1px">1 - 7 of 7</div></div>
<div class="a" style="left:837px;top:556px;font-size:9.5px;color:#5a5070;line-height:12px">&#215;</div>
<div class="a" style="left:846px;top:558px;line-height:0;opacity:.75"><svg width="11" height="9" viewBox="0 0 11 9"><rect width="11" height="9" fill="#2b3f8a"/><path d="M0 0 L11 9 M11 0 L0 9" stroke="#fff" stroke-width="1.8"/><path d="M0 0 L11 9 M11 0 L0 9" stroke="#d33" stroke-width="0.7"/><path d="M5.5 0 V9 M0 4.5 H11" stroke="#fff" stroke-width="2.6"/><path d="M5.5 0 V9 M0 4.5 H11" stroke="#d33" stroke-width="1.4"/></svg></div>
<div class="a" style="left:860px;top:555.7px;font-size:9px;color:#1a1a1a;line-height:12px;letter-spacing:-0.05px">London: 6:00 pm</div>
<div class="a" style="left:931.5px;top:556px;width:1px;height:12px;background:#c9c9c9"></div>
<div class="a" style="left:937px;top:558px;line-height:0;opacity:.75"><svg width="12" height="9" viewBox="0 0 12 9"><rect width="12" height="9" fill="#fff"/><g fill="#d9483b"><rect y="0" width="12" height="1"/><rect y="2" width="12" height="1"/><rect y="4" width="12" height="1"/><rect y="6" width="12" height="1"/><rect y="8" width="12" height="1"/></g><rect width="5" height="5" fill="#4b5fc9"/></svg></div>
<div class="a" style="left:951.5px;top:555.7px;font-size:9px;color:#1a1a1a;line-height:12px;letter-spacing:-0.05px">New York: 1:00 pm</div>
<div class="a" style="left:1030.5px;top:556px;width:1px;height:12px;background:#c9c9c9"></div>
<div class="a" style="left:1035px;top:558px;line-height:0;opacity:.75"><svg width="12" height="9" viewBox="0 0 12 9"><rect width="12" height="9" fill="#d8282a"/><circle cx="6" cy="4.5" r="2" fill="#fff"/></svg></div>
<div class="a" style="left:1049.5px;top:555.7px;font-size:9px;color:#1a1a1a;line-height:12px;letter-spacing:-0.05px">Hong Kong: 2:00 am</div>
<div class="a" style="left:1136px;top:556px;width:1px;height:12px;background:#c9c9c9"></div>
<div class="a" style="left:1140.5px;top:558px;line-height:0;opacity:.75"><svg width="12" height="9" viewBox="0 0 12 9"><rect width="12" height="9" fill="#273c8a"/><path d="M0 0 L5 4 M5 0 L0 4" stroke="#fff" stroke-width="0.8"/><path d="M2.5 0 V4 M0 2 H5" stroke="#d33" stroke-width="1"/><circle cx="9" cy="3" r="0.6" fill="#fff"/><circle cx="8" cy="6" r="0.6" fill="#fff"/><circle cx="10" cy="6.5" r="0.6" fill="#fff"/></svg></div>
<div class="a" style="left:1155px;top:555.7px;font-size:9px;color:#1a1a1a;line-height:12px;letter-spacing:-0.05px">Melbourne: 5:00 am</div>
<div class="a" style="left:1239.5px;top:556px;width:1px;height:12px;background:#c9c9c9"></div>
<div class="a" style="left:1245px;top:558px;line-height:0;opacity:.75"><svg width="12" height="9" viewBox="0 0 12 9"><rect width="12" height="9" fill="#fff"/><g fill="#d9483b"><rect y="0" width="12" height="1"/><rect y="2" width="12" height="1"/><rect y="4" width="12" height="1"/><rect y="6" width="12" height="1"/><rect y="8" width="12" height="1"/></g><rect width="6" height="5" fill="#2b3f8a"/><circle cx="3" cy="2.5" r="1.3" fill="#f2c21a"/></svg></div>
<div class="a" style="left:1258.5px;top:555.7px;font-size:9px;color:#1a1a1a;line-height:12px;letter-spacing:-0.05px">Julian &amp; Samsul - Malaysia: 2:00 am</div>
<div class="a" style="left:1407.5px;top:556px;width:1px;height:12px;background:#c9c9c9"></div>
<div class="a" style="left:1413px;top:558px;line-height:0;opacity:.75"><svg width="11" height="9" viewBox="0 0 11 9"><rect width="11" height="9" fill="#f2c21a"/><path d="M0 9 L11 0 V9 Z" fill="#e8772a"/><circle cx="5.5" cy="4.5" r="1.5" fill="#fff"/></svg></div>
<div class="a" style="left:1426.5px;top:555.7px;font-size:9px;color:#1a1a1a;line-height:12px;letter-spacing:-0.05px">Thimphu: 12:00 am</div>
<div class="a" style="left:113px;top:283px;width:33px;height:223px;background:#c1c1c1"></div>
<svg class="a" style="left:1115.5px;top:530.5px" width="11" height="17" viewBox="0 0 11 17"><path d="M1 1 L1 13 L3.8 10.5 L5.8 15.2 L7.8 14.4 L5.9 9.9 L9.8 9.5 Z" fill="#fff" stroke="#333" stroke-width="1.1" stroke-linejoin="round"/></svg>
<div class="a" style="left:707px;top:155px;width:109px;height:30px;background:#fff"></div>
<div class="a" style="left:708.5px;top:157px;width:104px;height:25px;border:1.5px solid #f1dc72;border-radius:2px"></div>
<svg class="a" style="left:711px;top:160px" width="21" height="18" viewBox="0 0 21 18"><rect x="0.5" y="0.5" width="20" height="17" rx="2" fill="#eccb3a"/><rect x="3" y="3.5" width="15" height="11" fill="#fff"/><g fill="#fff"><rect x="3" y="1" width="2" height="1.5"/><rect x="7" y="1" width="2" height="1.5"/><rect x="11" y="1" width="2" height="1.5"/><rect x="15" y="1" width="2" height="1.5"/><rect x="3" y="15.5" width="2" height="1.5"/><rect x="7" y="15.5" width="2" height="1.5"/><rect x="11" y="15.5" width="2" height="1.5"/><rect x="15" y="15.5" width="2" height="1.5"/></g><path d="M8 5.5 L14 9 L8 12.5 Z" fill="#eccb3a"/></svg>
<div class="a" style="left:735px;top:161px;font-size:11px;font-weight:bold;color:#1e1e1e;line-height:14px;letter-spacing:-0.1px">Show me how</div>

<div class="a" style="left:1477px;top:71px;width:30px;height:130px;background:#f2cd2e;border-radius:4px 0 0 4px;box-shadow:-2px 2px 6px rgba(242,205,46,.45)"></div>
<div class="a" style="left:1482px;top:75px;width:20px;height:100px;"><div style="position:absolute;left:0;top:0;transform-origin:0 0;transform:translate(20px,0) rotate(90deg);font-size:12px;color:#353535;line-height:20px;letter-spacing:0px;white-space:nowrap;width:100px">Need assistance?</div></div>
<svg class="a" style="left:1488px;top:180px" width="8" height="10" viewBox="0 0 8 10"><path d="M6 1 L2 5 L6 9" stroke="#a89a6a" stroke-width="1.3" fill="none"/></svg>

<div class="red" style="left:298px;top:102.5px;width:258px;height:35.5px"></div>
<div class="dot" style="left:369.5px;top:112px">a</div>
<div class="red" style="left:776px;top:86.5px;width:256px;height:78px"></div>
<div class="dot" style="left:785px;top:118px">b</div>
<div class="red" style="left:27.5px;top:282px;width:1490px;height:35px"></div>
<div class="dot" style="left:0.5px;top:288px">c</div>
<div class="red" style="left:243px;top:498.5px;width:1253px;height:33px"></div>
<div class="dot" style="left:480.5px;top:505.5px">d</div>
<div class="dot" style="left:1478.5px;top:291.2px">e</div>
</body></html>
